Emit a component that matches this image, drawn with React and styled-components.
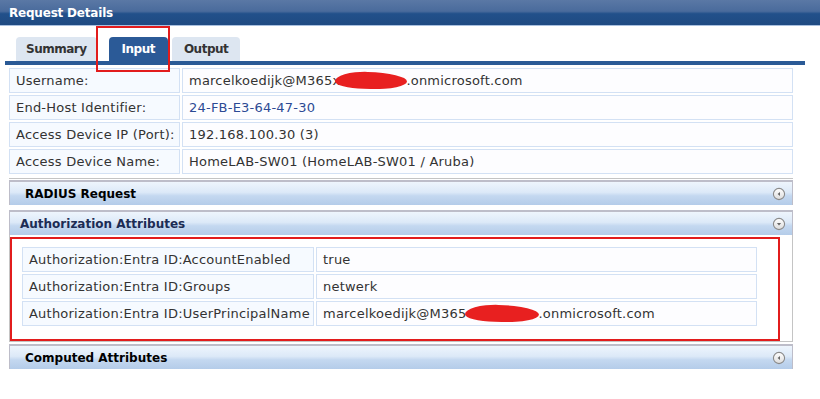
import styled, { createGlobalStyle } from 'styled-components'

const GlobalStyle = createGlobalStyle`
  html, body {
    margin: 0;
    padding: 0;
    background: #fff;
  }
  body {
    font-family: 'DejaVu Sans', Verdana, sans-serif;
    font-size: 13px;
    color: #333;
  }
`

const Page = styled.div`
  position: relative;
  width: 820px;
  height: 399px;
  overflow: hidden;
`

const TitleBar = styled.header`
  height: 25px;
  display: flex;
  align-items: center;
  padding-left: 9px;
  background: linear-gradient(#5a78a5 0%, #4a6b9c 45%, #22508a 55%, #1f4a82 100%);
  border-bottom: 1px solid #a9c0df;
  color: #fff;
  font-weight: bold;
  font-size: 12px;
  letter-spacing: -0.2px;
`

const Tabs = styled.nav`
  display: flex;
  align-items: flex-end;
  margin: 11px 0 0 5px;
  padding-left: 11px;
  width: 789px;
  border-bottom: 4px solid #2a5a96;
`

const Tab = styled.div`
  height: 24px;
  display: flex;
  align-items: center;
  padding: 0 ${p => p.$pad}px;
  margin-right: ${p => p.$gap}px;
  border-radius: 4px 4px 0 0;
  font-weight: bold;
  font-size: 12px;
  letter-spacing: -0.5px;
  background: ${p => (p.$active ? '#2b5a97' : '#dde6f1')};
  color: ${p => (p.$active ? '#fff' : '#333')};
`

const Body = styled.div`
  margin: 3px 0 0 9px;
  width: 784px;
`

const InfoGrid = styled.div`
  display: grid;
  grid-template-columns: ${p => p.$label}px 1fr;
  gap: 2px;
  padding-bottom: 4px;
  border-bottom: ${p => (p.$underline ? '1px solid #c4c4c4' : 'none')};
  width: ${p => p.$width || 784}px;
`

const Cell = styled.div`
  height: 25px;
  box-sizing: border-box;
  display: flex;
  align-items: center;
  padding-left: 6px;
  border: 1px solid #d3e1f4;
  background: ${p => (p.$label ? '#f6faff' : '#fdfdff')};
  color: ${p => (p.$link ? '#2c4a94' : '#333')};
  letter-spacing: 0.22px;
  white-space: nowrap;
`

const Redact = styled.span`
  display: inline-block;
  width: ${p => p.$w}px;
  height: 17px;
  margin: 0 -1px 0 ${p => p.$shift}px;
  background: #e82020;
  border-radius: 45% 55% 50% 40% / 60% 50% 50% 40%;
  transform: rotate(1.5deg);
`

const SectionHeader = styled.div`
  height: 25px;
  box-sizing: border-box;
  display: flex;
  align-items: center;
  justify-content: space-between;
  margin-top: ${p => p.$top}px;
  padding: 0 6px 0 ${p => p.$indent}px;
  border: 1px solid #bdbdc9;
  border-top-width: 2px;
  border-bottom: none;
  background: linear-gradient(#eef5fd 0%, #dce9f8 45%, #c4d8f0 60%, #b4cce9 100%);
  font-weight: bold;
  font-size: 12px;
  color: ${p => (p.$open ? '#1c2c54' : '#000')};
`

const Panel = styled.div`
  border: 1px solid #c4c4c4;
  border-top: none;
  padding: 2px 12px 0 0;
`

const Annotation = styled.div`
  border: 2px solid #e21c1c;
  padding: 8px 21px 9px 10px;
`

const TabMarker = styled.div`
  position: absolute;
  left: 96px;
  top: 26px;
  width: 70px;
  height: 42px;
  border: 2px solid #e21c1c;
`

const ToggleIcon = ({ open }) => (
  <svg width="14" height="14" viewBox="0 0 14 14">
    <defs>
      <linearGradient id={open ? 'gOpen' : 'gClosed'} x1="0" y1="0" x2="0" y2="1">
        <stop offset="0" stopColor="#ffffff" />
        <stop offset="1" stopColor="#dcdcdc" />
      </linearGradient>
    </defs>
    <circle cx="7" cy="7" r="5.6" fill={`url(#${open ? 'gOpen' : 'gClosed'})`} stroke="#8a8a8a" strokeWidth="1.1" />
    {open ? (
      <path d="M4.9 6 L9.1 6 L7 8.4 Z" fill="#666" />
    ) : (
      <path d="M8 4.9 L8 9.1 L5.6 7 Z" fill="#666" />
    )}
  </svg>
)

const details = [
  { label: 'Username:', value: 'user' },
  { label: 'End-Host Identifier:', value: '24-FB-E3-64-47-30', link: true },
  { label: 'Access Device IP (Port):', value: '192.168.100.30 (3)' },
  { label: 'Access Device Name:', value: 'HomeLAB-SW01 (HomeLAB-SW01 / Aruba)' },
]

const attributes = [
  { label: 'Authorization:Entra ID:AccountEnabled', value: 'true' },
  { label: 'Authorization:Entra ID:Groups', value: 'netwerk' },
  { label: 'Authorization:Entra ID:UserPrincipalName', value: 'upn' },
]

const App = () => {
  return (
    <Page>
      <GlobalStyle />
      <TitleBar>Request Details</TitleBar>
      <Tabs>
        <Tab $pad={10} $gap={12}>Summary</Tab>
        <Tab $pad={13} $gap={4} $active>Input</Tab>
        <Tab $pad={12} $gap={0}>Output</Tab>
      </Tabs>
      <TabMarker />
      <Body>
        <InfoGrid $label={171} $underline>
          {details.map(d => (
            <>
              <Cell $label key={d.label}>{d.label}</Cell>
              <Cell $link={d.link}>
                {d.value === 'user' ? (
                  <>marcelkoedijk@M365x<Redact $w={72} $shift={-5} />.onmicrosoft.com</>
                ) : (
                  d.value
                )}
              </Cell>
            </>
          ))}
        </InfoGrid>
        <SectionHeader $top={1} $indent={15}>
          RADIUS Request
          <ToggleIcon />
        </SectionHeader>
        <SectionHeader $top={5} $indent={10} $open>
          Authorization Attributes
          <ToggleIcon open />
        </SectionHeader>
        <Panel>
          <Annotation>
            <InfoGrid $label={292} $width={735}>
              {attributes.map(a => (
                <>
                  <Cell $label key={a.label}>{a.label}</Cell>
                  <Cell>
                    {a.value === 'upn' ? (
                      <>marcelkoedijk@M365<Redact $w={74} $shift={-1} />.onmicrosoft.com</>
                    ) : (
                      a.value
                    )}
                  </Cell>
                </>
              ))}
            </InfoGrid>
          </Annotation>
        </Panel>
        <SectionHeader $top={2} $indent={15}>
          Computed Attributes
          <ToggleIcon />
        </SectionHeader>
      </Body>
    </Page>
  )
}

export default App
